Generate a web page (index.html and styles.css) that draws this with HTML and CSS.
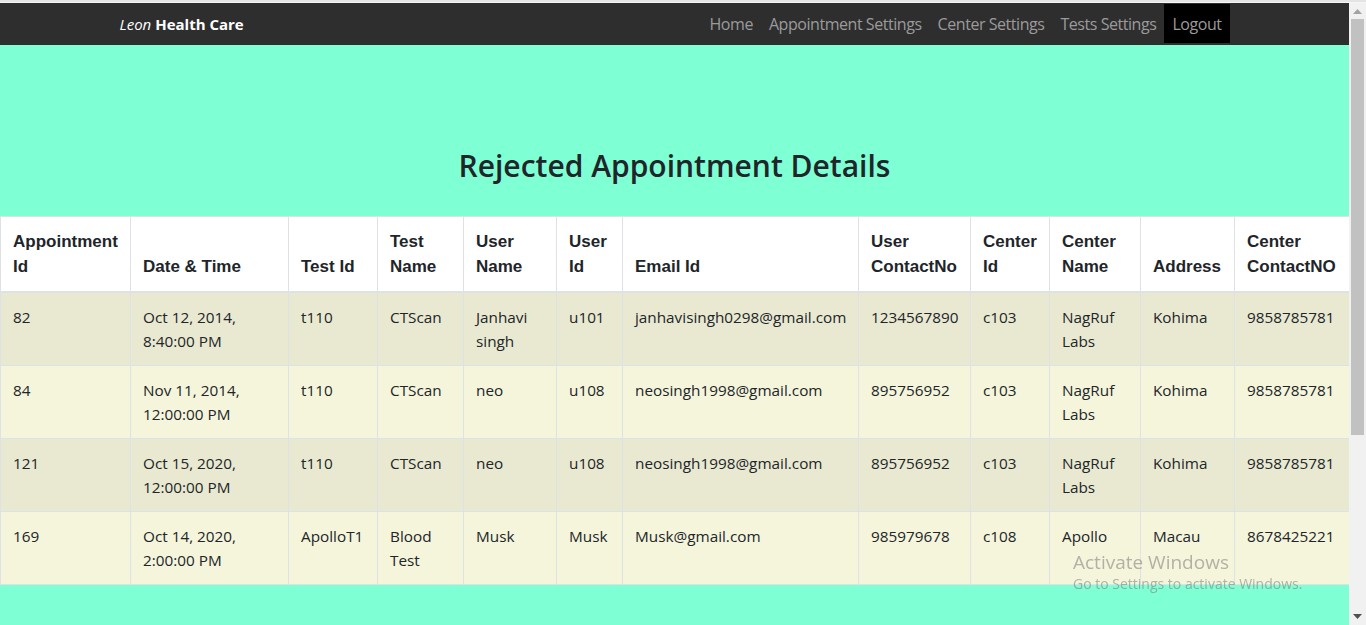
FILE: index.html
```html
<!DOCTYPE html>
<html lang="en">
<head>
<meta charset="utf-8">
<title>Rejected Appointment Details</title>
<link rel="stylesheet" href="styles.css">
</head>
<body>
<div class="topline"></div>
<div class="window">
  <div class="page">
    <nav class="navbar">
      <div class="container nav-inner">
        <a class="brand" href="#"><i>Leon</i> <b>Health Care</b></a>
        <ul class="nav-links">
          <li><a href="#">Home</a></li>
          <li><a href="#">Appointment Settings</a></li>
          <li><a href="#">Center Settings</a></li>
          <li><a href="#">Tests Settings</a></li>
          <li><a href="#" class="active">Logout</a></li>
        </ul>
      </div>
    </nav>
    <section class="heading-wrap">
      <h2 class="heading">Rejected Appointment Details</h2>
    </section>
    <table class="data-table">
      <colgroup>
        <col class="c1"><col class="c2"><col class="c3"><col class="c4"><col class="c5"><col class="c6">
        <col class="c7"><col class="c8"><col class="c9"><col class="c10"><col class="c11"><col class="c12">
      </colgroup>
      <thead>
        <tr>
          <th>Appointment Id</th>
          <th>Date &amp; Time</th>
          <th>Test Id</th>
          <th>Test Name</th>
          <th>User Name</th>
          <th>User Id</th>
          <th>Email Id</th>
          <th>User ContactNo</th>
          <th>Center Id</th>
          <th>Center Name</th>
          <th>Address</th>
          <th>Center ContactNO</th>
        </tr>
      </thead>
      <tbody>
        <tr>
          <td>82</td><td>Oct 12, 2014, 8:40:00 PM</td><td>t110</td><td>CTScan</td><td>Janhavi singh</td><td>u101</td>
          <td>janhavisingh0298@gmail.com</td><td>1234567890</td><td>c103</td><td>NagRuf Labs</td><td>Kohima</td><td>9858785781</td>
        </tr>
        <tr>
          <td>84</td><td>Nov 11, 2014, 12:00:00 PM</td><td>t110</td><td>CTScan</td><td>neo</td><td>u108</td>
          <td>neosingh1998@gmail.com</td><td>895756952</td><td>c103</td><td>NagRuf Labs</td><td>Kohima</td><td>9858785781</td>
        </tr>
        <tr>
          <td>121</td><td>Oct 15, 2020, 12:00:00 PM</td><td>t110</td><td>CTScan</td><td>neo</td><td>u108</td>
          <td>neosingh1998@gmail.com</td><td>895756952</td><td>c103</td><td>NagRuf Labs</td><td>Kohima</td><td>9858785781</td>
        </tr>
        <tr>
          <td>169</td><td>Oct 14, 2020, 2:00:00 PM</td><td>ApolloT1</td><td>Blood Test</td><td>Musk</td><td>Musk</td>
          <td>Musk@gmail.com</td><td>985979678</td><td>c108</td><td>Apollo</td><td>Macau</td><td>8678425221</td>
        </tr>
      </tbody>
    </table>
  </div>
  <div class="scrollbar">
    <div class="sb-btn sb-up"><svg width="9" height="5" viewBox="0 0 9 5"><polygon points="0,5 4.5,0 9,5" fill="#a3a3a3"/></svg></div>
    <div class="sb-thumb"></div>
    <div class="sb-track"></div>
    <div class="sb-btn sb-down"><svg width="9" height="5" viewBox="0 0 9 5"><polygon points="0,0 4.5,5 9,0" fill="#505050"/></svg></div>
  </div>
</div>
<div class="watermark">
  <div class="wm-title">Activate Windows</div>
  <div class="wm-sub">Go to Settings to activate Windows.</div>
</div>
</body>
</html>
```

FILE: styles.css
```css
* { box-sizing: border-box; }

html, body {
  margin: 0;
  height: 625px;
  overflow: hidden;
}

body {
  display: flex;
  flex-direction: column;
  font-family: "Open Sans", "Noto Sans", sans-serif;
  color: #212529;
  background: #7fffd4;
}

.topline {
  height: 3px;
  background: #e4e4e4;
  border-bottom: 1px solid #f6f6f6;
  flex: none;
}

.window {
  flex: 1;
  display: flex;
  min-height: 0;
}

.page {
  flex: 1;
  min-width: 0;
  background: #7fffd4;
  overflow: hidden;
}

/* Navbar */
.navbar {
  background: #2e2e2e;
  height: 42px;
  padding: 1px 0 2px;
}

.container {
  max-width: 1140px;
  margin: 0 auto;
  padding: 0 15px;
}

.nav-inner {
  display: flex;
  align-items: center;
  justify-content: space-between;
  height: 39px;
}

.brand {
  color: #fff;
  text-decoration: none;
  font-size: 15px;
  line-height: 24px;
  padding-top: 1px;
}

.brand i { font-weight: 400; }
.brand b { font-weight: 700; }

.nav-links {
  list-style: none;
  margin: 0;
  padding: 0;
  display: flex;
  height: 39px;
}

.nav-links a {
  display: block;
  height: 39px;
  line-height: 39px;
  padding: 1px 8px 0;
  color: #9b9b9b;
  text-decoration: none;
  font-size: 16px;
  letter-spacing: -0.45px;
}

.nav-links a.active {
  background: #000;
}

/* Heading */
.heading-wrap {
  padding-top: 101px;
  padding-bottom: 30px;
  text-align: center;
}

.heading {
  margin: 0;
  font-size: 30px;
  font-weight: 600;
  line-height: 40px;
  color: #212529;
}

/* Table */
.data-table {
  width: 1349px;
  table-layout: fixed;
  border-collapse: collapse;
  background: #f5f5dc;
  border: 1px solid #dee2e6;
}

.c1 { width: 130px; }
.c2 { width: 158px; }
.c3 { width: 89px; }
.c4 { width: 86px; }
.c5 { width: 93px; }
.c6 { width: 66px; }
.c7 { width: 236px; }
.c8 { width: 112px; }
.c9 { width: 79px; }
.c10 { width: 91px; }
.c11 { width: 94px; }
.c12 { width: 115px; }

.data-table th,
.data-table td {
  border: 1px solid #dee2e6;
  padding: 12px;
  text-align: left;
}

.data-table th {
  background: #fff;
  font-family: "Liberation Sans", Arial, sans-serif;
  font-weight: 700;
  font-size: 17px;
  line-height: 25px;
  vertical-align: bottom;
  border-bottom-width: 2px;
}

.data-table td {
  font-size: 15.3px;
  line-height: 24px;
  vertical-align: top;
  height: 73px;
}

.data-table tbody tr:nth-child(odd) td {
  background: #e9e9d1;
}

/* Fake scrollbar */
.scrollbar {
  width: 17px;
  flex: none;
  background: #f1f1f1;
  display: flex;
  flex-direction: column;
  align-items: center;
}

.sb-btn {
  width: 17px;
  display: flex;
  align-items: center;
  justify-content: center;
  flex: none;
}

.sb-up { height: 16px; }
.sb-down { height: 17px; }

.sb-thumb {
  width: 13px;
  height: 416px;
  background: #c1c1c1;
  flex: none;
}

.sb-track { flex: 1; }

/* Windows activation watermark overlay */
.watermark {
  position: fixed;
  left: 1073px;
  top: 549px;
  color: rgba(120, 120, 120, 0.55);
  font-family: "Open Sans", "Noto Sans", sans-serif;
  pointer-events: none;
}

.wm-title {
  font-size: 19px;
  line-height: 26px;
}

.wm-sub {
  font-size: 14px;
  line-height: 18px;
  margin-top: 0;
}
```
